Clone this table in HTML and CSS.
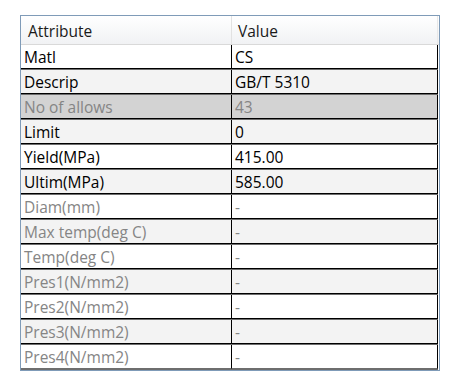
FILE: index.html
```html
<!DOCTYPE html>
<html>
<head>
<meta charset="utf-8">
<link rel="stylesheet" href="styles.css">
</head>
<body>
<div class="grid">
  <div class="head">
    <div class="hcell c1">Attribute</div>
    <div class="hcell c2">Value</div>
  </div>
  <div class="body">
    <div class="row"><div class="cell c1">Matl</div><div class="cell c2">CS</div></div>
    <div class="row alt"><div class="cell c1">Descrip</div><div class="cell c2">GB/T 5310</div></div>
    <div class="row sel dis"><div class="cell c1">No of allows</div><div class="cell c2">43</div></div>
    <div class="row alt"><div class="cell c1">Limit</div><div class="cell c2">0</div></div>
    <div class="row"><div class="cell c1">Yield(MPa)</div><div class="cell c2">415.00</div></div>
    <div class="row alt"><div class="cell c1">Ultim(MPa)</div><div class="cell c2">585.00</div></div>
    <div class="row dis"><div class="cell c1">Diam(mm)</div><div class="cell c2">-</div></div>
    <div class="row alt dis"><div class="cell c1">Max temp(deg C)</div><div class="cell c2">-</div></div>
    <div class="row dis"><div class="cell c1">Temp(deg C)</div><div class="cell c2">-</div></div>
    <div class="row alt dis"><div class="cell c1">Pres1(N/mm2)</div><div class="cell c2">-</div></div>
    <div class="row dis"><div class="cell c1">Pres2(N/mm2)</div><div class="cell c2">-</div></div>
    <div class="row alt dis"><div class="cell c1">Pres3(N/mm2)</div><div class="cell c2">-</div></div>
    <div class="row dis last"><div class="cell c1">Pres4(N/mm2)</div><div class="cell c2">-</div></div>
  </div>
</div>
</body>
</html>
```
FILE: styles.css
```css
html, body {
  margin: 0;
  padding: 0;
  background: #ffffff;
}
body {
  font-family: "Open Sans", "Noto Sans", "Noto Sans CJK SC", sans-serif;
  font-size: 15.5px;
  color: #000;
}
.grid {
  margin: 15px 0 0 20px;
  width: 420px;
  box-sizing: border-box;
  border: 1px solid #7f9bb8;
  background: #fff;
}
.head {
  display: flex;
  height: 29px;
  box-sizing: border-box;
  background: linear-gradient(#ffffff, #f1f2f4);
  border-bottom: 1px solid #d9d9d9;
}
.hcell {
  display: flex;
  align-items: center;
  box-sizing: border-box;
  padding-top: 1px;
  color: #1a1a1a;
}
.hcell.c1 {
  width: 211px;
  padding-left: 7px;
  border-right: 1px solid #e2e2e2;
}
.hcell.c2 {
  flex: 1;
  padding-left: 6px;
  margin-right: 1px;
  border-right: 1px solid #e8e8e8;
}
.body {
  padding-right: 1px;
}
.row {
  display: flex;
  height: 25px;
  box-sizing: border-box;
  border-bottom: 1px solid #6e6e6e;
  background: #fff;
}
.row.alt { background: #f3f3f3; }
.row.sel { background: #d3d3d3; }
.row.dis { color: #858585; }
.cell {
  display: flex;
  align-items: center;
  box-sizing: border-box;
  height: 24px;
  border-bottom: 1px solid #000;
  padding-top: 0;
  white-space: nowrap;
}
.row.last .cell { border-bottom-color: #6e6e6e; }
.cell.c1 {
  width: 211px;
  padding-left: 3px;
  border-right: 1px solid #000;
}
.cell.c2 {
  flex: 1;
  padding-left: 3px;
  border-right: 1px solid #000;
}
```
